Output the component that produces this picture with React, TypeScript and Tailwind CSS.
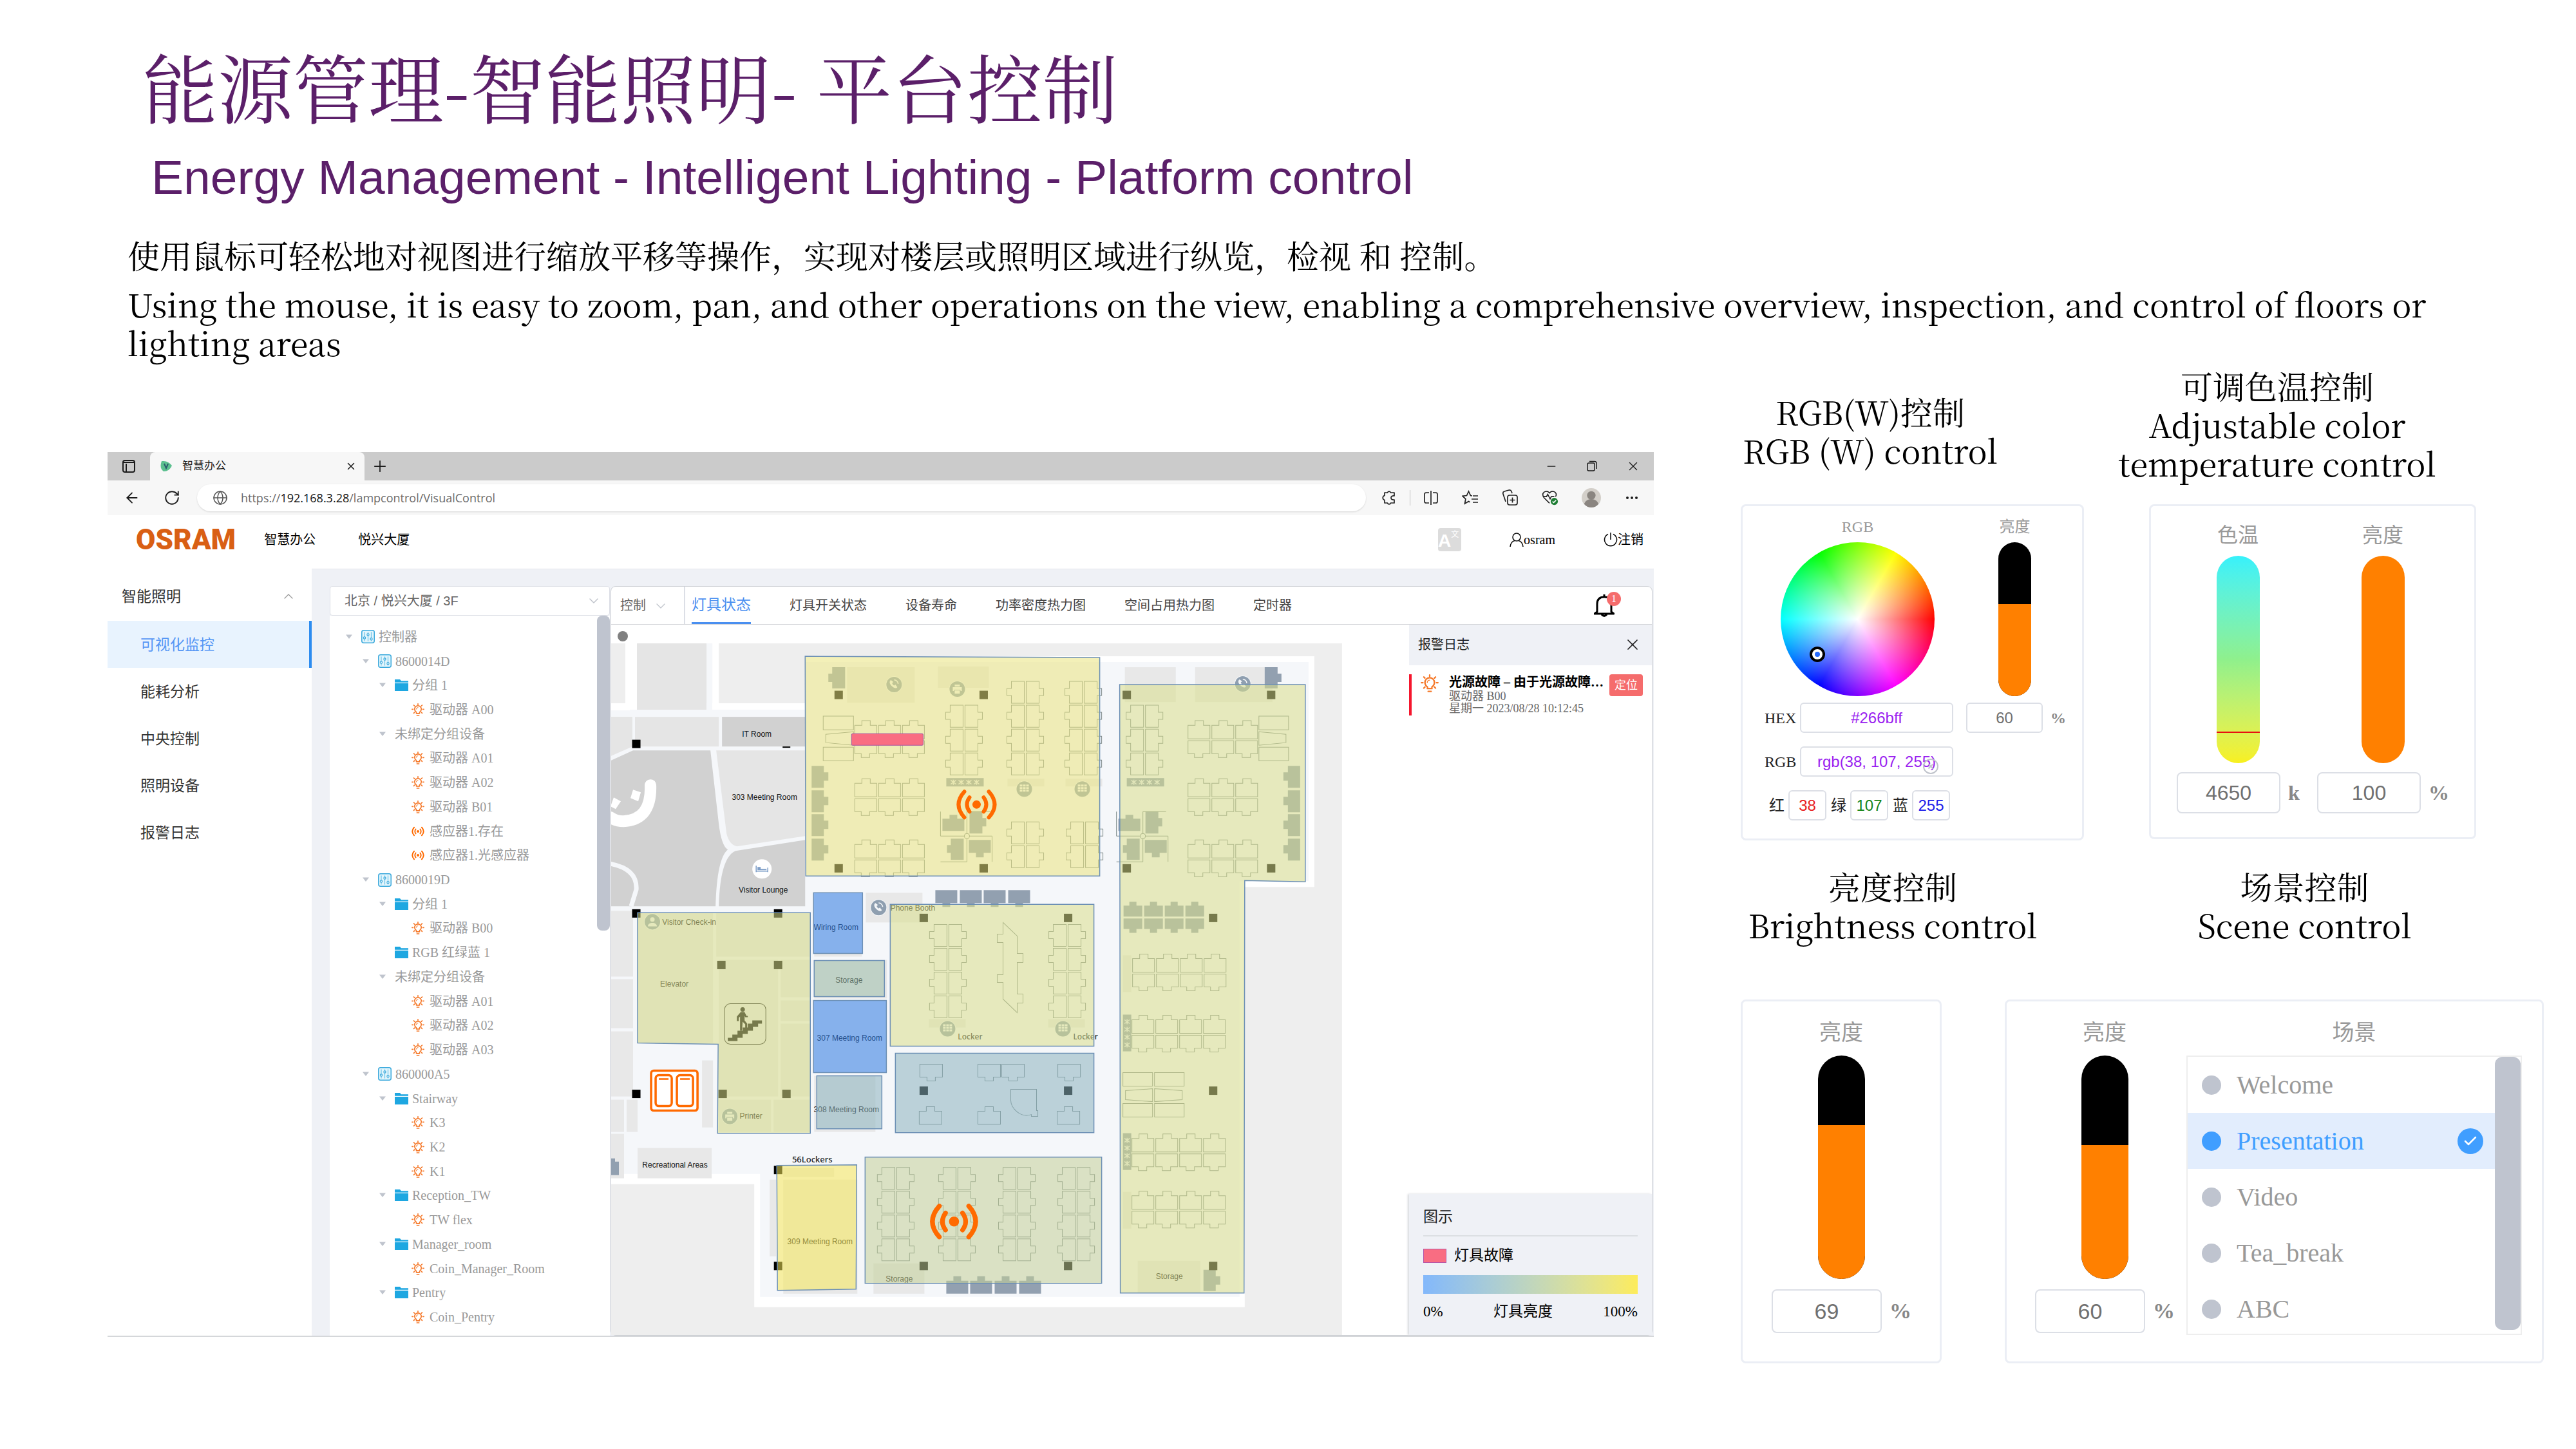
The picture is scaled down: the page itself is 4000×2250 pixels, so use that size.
import React from "react";
import {
  ArrowLeft,
  Check,
  ChevronDown,
  ChevronUp,
  Ellipsis,
  Globe,
  Minus,
  Plus,
  RotateCw,
  X,
} from "lucide-react";

const noop = () => {};

/* ---------- small icons ---------- */

function BulbIcon({ className }: { className: string }) {
  return (
    <svg viewBox="0 0 24 24" className={className} fill="none" stroke="#f5792a" strokeWidth="2" strokeLinecap="round">
      <path d="M9 19v-2.200C7 15.400 5.700 13.300 5.700 10.900a6.300 6.300 0 0 1 12.600 0c0 2.400-1.300 4.500-3.300 5.900V19z" strokeLinejoin="round" />
      <path d="M10 22.800h4M12 1v2M4.200 3.600l1.400 1.400M19.800 3.600l-1.400 1.400M1 11.200h2M21 11.200h2M4.200 18.400l1.400-1.400M19.800 18.400l-1.400-1.400" />
      <path d="M12 7.800a3.200 3.200 0 0 0-3.200 3.200" strokeWidth="1.200" />
    </svg>
  );
}

function SensorIcon({ className }: { className: string }) {
  return (
    <svg viewBox="-32 -24 64 48" className={className}>
      <SensorShape />
    </svg>
  );
}

function SensorShape() {
  return (
    <g fill="none" stroke="#ff6a00" strokeWidth="6" strokeLinecap="round">
      <circle r="6.5" fill="#ff6a00" stroke="none" />
      <path d="M-11 -11q-8 11 0 22M11 -11q8 11 0 22M-19 -20q-18 20 0 40M19 -20q18 20 0 40" />
    </g>
  );
}

function ControllerIcon() {
  return (
    <svg viewBox="0 0 21 21" className="size-[21px]" fill="none" stroke="#3aa9dc" strokeWidth="1.200">
      <rect x="0.800" y="0.800" width="19.400" height="19.400" rx="3" fill="#e3f5fc" strokeWidth="1.500" />
      <path d="M5 3.500v7.500M5 14v3.500M10.500 3.500v2.500M10.500 9v8.500M15.500 3.500v9M15.500 15.500v2" stroke="#6cc3e8" />
      <circle cx="5" cy="12.500" r="1.600" fill="#fff" />
      <circle cx="10.500" cy="7.500" r="1.600" fill="#fff" />
      <circle cx="15.500" cy="14.200" r="1.600" fill="#fff" />
    </svg>
  );
}

function FolderIcon() {
  return (
    <svg viewBox="0 0 21 18" className="h-[18px] w-[21px]">
      <path d="M0 0h8l2 2.200h11v2.600H0z" fill="#1ea7e1" />
      <path d="M0 6h21v12H0z" fill="#1ea7e1" />
    </svg>
  );
}

/* ---------- device tree ---------- */

type NodeKind = "controller" | "folder" | "group" | "lamp" | "sensor";
type TreeNode = { depth: 0 | 1 | 2 | 3; kind: NodeKind; label: string; leaf?: boolean };

const tree: TreeNode[] = [
  { depth: 0, kind: "controller", label: "控制器" },
  { depth: 1, kind: "controller", label: "8600014D" },
  { depth: 2, kind: "folder", label: "分组 1" },
  { depth: 3, kind: "lamp", label: "驱动器 A00" },
  { depth: 2, kind: "group", label: "未绑定分组设备" },
  { depth: 3, kind: "lamp", label: "驱动器 A01" },
  { depth: 3, kind: "lamp", label: "驱动器 A02" },
  { depth: 3, kind: "lamp", label: "驱动器 B01" },
  { depth: 3, kind: "sensor", label: "感应器1.存在" },
  { depth: 3, kind: "sensor", label: "感应器1.光感应器" },
  { depth: 1, kind: "controller", label: "8600019D" },
  { depth: 2, kind: "folder", label: "分组 1" },
  { depth: 3, kind: "lamp", label: "驱动器 B00" },
  { depth: 2, kind: "folder", label: "RGB 红绿蓝 1", leaf: true },
  { depth: 2, kind: "group", label: "未绑定分组设备" },
  { depth: 3, kind: "lamp", label: "驱动器 A01" },
  { depth: 3, kind: "lamp", label: "驱动器 A02" },
  { depth: 3, kind: "lamp", label: "驱动器 A03" },
  { depth: 1, kind: "controller", label: "860000A5" },
  { depth: 2, kind: "folder", label: "Stairway" },
  { depth: 3, kind: "lamp", label: "K3" },
  { depth: 3, kind: "lamp", label: "K2" },
  { depth: 3, kind: "lamp", label: "K1" },
  { depth: 2, kind: "folder", label: "Reception_TW" },
  { depth: 3, kind: "lamp", label: "TW flex" },
  { depth: 2, kind: "folder", label: "Manager_room" },
  { depth: 3, kind: "lamp", label: "Coin_Manager_Room" },
  { depth: 2, kind: "folder", label: "Pentry" },
  { depth: 3, kind: "lamp", label: "Coin_Pentry" },
];

const indent = { 0: "pl-6", 1: "pl-[50px]", 2: "pl-[76px]", 3: "pl-[102px]" };

function TreeRow({ node }: { node: TreeNode }) {
  const hasArrow = !node.leaf && node.depth < 3;
  return (
    <li className={`flex flex-1 items-center ${indent[node.depth]}`}>
      <button type="button" className="flex items-center gap-[13px] leading-6 whitespace-nowrap">
        <svg viewBox="0 0 12 8" className="h-2 w-3">
          {hasArrow && <path d="M1 0.500h10L6 7z" fill="#bfc4cd" />}
        </svg>
        <span className="flex items-center gap-1.5">
          {node.kind === "controller" && <ControllerIcon />}
          {node.kind === "folder" && <FolderIcon />}
          {node.kind === "lamp" && <BulbIcon className="mr-0.5 size-5" />}
          {node.kind === "sensor" && <SensorIcon className="mr-0.5 h-4 w-5" />}
          {node.label}
        </span>
      </button>
    </li>
  );
}

/* ---------- floor plan ---------- */

type Pt = [number, number];

const deskColumns: { x: number; y: number; n: number }[] = [
  { x: 1468, y: 1095, n: 3 },
  { x: 1563, y: 1058, n: 4 },
  { x: 1653, y: 1058, n: 4 },
  { x: 1563, y: 1276, n: 2 },
  { x: 1655, y: 1276, n: 2 },
  { x: 1748, y: 1095, n: 3 },
  { x: 1443, y: 1435, n: 4 },
  { x: 1628, y: 1435, n: 4 },
  { x: 1362, y: 1812, n: 4 },
  { x: 1457, y: 1812, n: 4 },
  { x: 1550, y: 1812, n: 4 },
  { x: 1642, y: 1812, n: 4 },
];

const deskRows: { x: number; y: number; n: number }[] = [
  { x: 1327, y: 1119, n: 3 },
  { x: 1327, y: 1209, n: 3 },
  { x: 1327, y: 1304, n: 3 },
  { x: 1844, y: 1119, n: 3 },
  { x: 1844, y: 1209, n: 3 },
  { x: 1844, y: 1304, n: 3 },
  { x: 1758, y: 1481, n: 4 },
  { x: 1757, y: 1576, n: 4 },
  { x: 1757, y: 1760, n: 4 },
  { x: 1757, y: 1849, n: 4 },
];

const pillars: Pt[] = [
  [988, 1155], [1302, 1079], [1527, 1079], [1302, 1348], [1527, 1348],
  [1749, 1079], [1973, 1079], [1749, 1348], [1973, 1348],
  [988, 1418], [1208, 1418], [1120, 1498], [1208, 1498], [988, 1698], [1122, 1698], [1221, 1698],
  [1434, 1425], [1658, 1425], [1434, 1693], [1658, 1693],
  [1208, 1816], [1208, 1965], [1434, 1965], [1658, 1965],
  [1883, 1425], [1883, 1693], [1883, 1965],
];

const greyBlocks: [number, number, number, number][] = [
  [948, 1414, 35, 102], [948, 1520, 35, 76], [948, 1601, 35, 101], [948, 1707, 21, 50],
  [973, 1707, 17, 50], [948, 1760, 21, 69], [1090, 1646, 17, 104], [990, 1782, 115, 47],
  [990, 1417, 117, 202], [1112, 1417, 146, 68], [1116, 1490, 92, 212], [1212, 1490, 46, 58],
  [1212, 1553, 46, 32], [1212, 1589, 46, 113], [1116, 1707, 81, 50], [1201, 1707, 57, 50],
  [1344, 1386, 88, 46], [1264, 1386, 74, 99], [1264, 1490, 113, 60], [1264, 1553, 113, 112],
  [1264, 1670, 95, 87], [1195, 1831, 10, 119], [1216, 1831, 115, 177], [1216, 1813, 79, 14],
  [1356, 1961, 79, 47], [1442, 1582, 57, 13], [1627, 1582, 57, 13],
  [1315, 1036, 105, 55], [1456, 1035, 79, 33], [1564, 1209, 57, 12], [1654, 1209, 57, 12],
  [1746, 1036, 79, 54], [1855, 1036, 120, 54], [1743, 1483, 13, 57], [1743, 1850, 13, 57],
  [1766, 1957, 97, 50],
];

const filledDesks: string[] = [
  "M1292 1036h20v33h-20v-10h-6v-13h6z",
  "M1963 1036h20v10h6v13h-6v10h-20z",
  "M1868 1971h19v10h7v13h-7v10h-19z",
  "M948 1798h7v5h6v21h-13z",
  ...[1189, 1227, 1264, 1302].map((y) => `M1260 ${y}h19v10h7v13h-7v11h-19z`),
  ...[1189, 1227, 1264, 1302].map((y) => `M1999 ${y}h19v34h-19v-11h-7v-13h7z`),
  ...[1452, 1490, 1527, 1565].map((x) => `M${x} 1382h34v20h-11v6h-12v-6h-11z`),
  ...[1469, 1506, 1544, 1582].map((x) => `M${x} 1988h11v-7h12v7h11v20h-34z`),
  ...[1744, 1776, 1808, 1840].map((x) => `M${x} 1406h9v-6h11v6h9v17h-29zM${x} 1426h29v16h-9v6h-11v-6h-9z`),
];

const labels: [number, number, string][] = [
  [1175, 1144, "IT Room"],
  [1187, 1242, "303 Meeting Room"],
  [1185, 1386, "Visitor Lounge"],
  [1070, 1436, "Visitor Check-in"],
  [1047, 1532, "Elevator"],
  [1298, 1444, "Wiring Room"],
  [1318, 1526, "Storage"],
  [1319, 1615, "307 Meeting Room"],
  [1314, 1726, "308 Meeting Room"],
  [1417, 1414, "Phone Booth"],
  [1166, 1736, "Printer"],
  [1048, 1812, "Recreational Areas"],
  [1273, 1931, "309 Meeting Room"],
  [1396, 1989, "Storage"],
  [1815, 1985, "Storage"],
];

const zones: { points: string; fill: string }[] = [
  { points: "1250,1019 1707,1021 1707,1360 1251,1360", fill: "#eae37e" },
  { points: "1738,1063 2026,1063 2026,1369 1932,1367 1931,2007 1739,2007", fill: "#d8de8a" },
  { points: "990,1417 1258,1417 1258,1759 1114,1759 1115,1621 990,1619", fill: "#d8de8a" },
  { points: "1263,1386 1339,1386 1339,1480 1263,1480", fill: "#3583ee" },
  { points: "1264,1491 1373,1491 1373,1547 1264,1547", fill: "#9dbeaa" },
  { points: "1263,1553 1376,1553 1376,1665 1263,1665", fill: "#3583ee" },
  { points: "1268,1670 1369,1670 1369,1752 1268,1752", fill: "#8ab2bd" },
  { points: "1382,1404 1698,1404 1698,1624 1382,1624", fill: "#d8de8a" },
  { points: "1390,1635 1698,1635 1698,1758 1390,1758", fill: "#8ab2bd" },
  { points: "1206,1809 1330,1808 1329,2001 1207,2003", fill: "#f5e758" },
  { points: "1343,1796 1710,1796 1710,1992 1343,1992", fill: "#c3cf97" },
];

function Meeting({ x, flip }: { x: number; flip?: boolean }) {
  return (
    <path
      d={
        flip
          ? `M${x} 1112h46v21h-46zM${x} 1160h46v21h-46zM${x} 1136l42 4v13l-42 4z`
          : `M${x} 1112h47v21h-47zM${x} 1160h47v21h-47zM${x + 47} 1136l-43 4v13l43 4z`
      }
    />
  );
}

function Pod({ x }: { x: number }) {
  return (
    <g transform={`translate(${x} 0)`}>
      <path
        fill="#92a0b0"
        d="M-38 1271h11v-6h12v6h11v19h-34zM4 1260h20v10h6v13h-6v11h-20zM-25 1302h20v33h-20v-11h-6v-12h6zM3 1304h34v20h-11v7h-12v-7h-11z"
      />
      <path d="M0 1260v78M-41 1298h80M-41 1260v38M39 1298v40M-41 1338h41M0 1260h36" fill="none" stroke="#7d8a8a" />
      <circle cx="0" cy="1298" r="4" fill="#f4f6f8" stroke="#7d8a8a" />
    </g>
  );
}

function Planter({ x, y, vertical }: { x: number; y: number; vertical?: boolean }) {
  return (
    <g transform={`translate(${x} ${y})`}>
      <rect width={vertical ? 13 : 58} height={vertical ? 57 : 13} fill="#92a0b0" />
      {[11, 23, 35, 47].map((p) => {
        const cx = vertical ? 6.5 : p;
        const cy = vertical ? p : 6.5;
        return (
          <path
            key={p}
            d={`M${cx - 4} ${cy - 3}l8 6M${cx + 4} ${cy - 3}l-8 6M${cx} ${cy - 4}v8`}
            stroke="#e8ecf0"
            strokeWidth="1.5"
          />
        );
      })}
    </g>
  );
}

function Marker({ x, y, kind }: { x: number; y: number; kind: "phone" | "printer" | "locker" | "person" }) {
  return (
    <g transform={`translate(${x} ${y})`}>
      <circle r="13" fill="#f4f6f8" />
      <circle r="12" fill="#8f9fb0" />
      <g fill="#f4f6f8">
        {kind === "phone" && (
          <path d="M-5 -7c-3 2-2 6 1 9s7 5 9 2l-3-4-2 1.500c-2-1-3-3-3-4l2-1.500zM0 -8a7 7 0 0 1 7 7h-1.500A5.500 5.500 0 0 0 0 -6.500z" />
        )}
        {kind === "printer" && <path d="M-4 -7h8v3h-8zM-7 -3H7v6H5v-2H-5v2h-2zM-4 2h8v5h-8z" />}
        {kind === "locker" && (
          <path d="M-7 -7h4v3h-4zM-2 -7h4v3h-4zM3 -7h4v3h-4zM-7 -3h4v3h-4zM-2 -3h4v3h-4zM3 -3h4v3h-4zM-7 1h4v3h-4zM-2 1h4v3h-4zM3 1h4v3h-4z" />
        )}
        {kind === "person" && <path d="M0 -7a3.500 3.500 0 1 1 0 7a3.500 3.500 0 0 1 0-7zM-7 7c0-7 14-7 14 0z" />}
      </g>
    </g>
  );
}

function FloorPlan() {
  return (
    <svg viewBox="949 970 1238 1103" preserveAspectRatio="xMinYMin slice" className="h-[1103px] w-full" role="img" aria-label="3F 平面图">
      <rect x="948" y="999" width="1135" height="1074" fill="#eeeeee" />
      <path d="M948 1092h302v-73h790v358h-108v652H1171v-191H948z" fill="#ffffff" />
      <path d="M948 1102h302v-74h781v340h-107v645H1180v-191H948z" fill="#f5f7fa" />

      {/* outdoor paths */}
      <rect x="971" y="999" width="18" height="100" fill="#fff" />
      <rect x="948" y="1092" width="30" height="11" fill="#fff" />
      <rect x="989" y="999" width="108" height="103" fill="#e5e5e5" />
      <rect x="1097" y="999" width="9" height="103" fill="#f5f7fa" />
      <path d="M1106 999h10v95h134v8h-144z" fill="#fff" />

      {/* lobby */}
      <path d="M948 1113h34v46l-34 15z" fill="#e5e5e5" />
      <rect x="986" y="1113" width="130" height="46" fill="#e5e5e5" />
      <rect x="1121" y="1113" width="129" height="46" fill="#d1d1d1" />
      <path d="M948 1181l35-16h120l13 114q4 34 14 40q-17 14-19 88H948z" fill="#d1d1d1" />
      <path d="M1112 1165h138v133l-106 16q-12-3-16-20z" fill="#e5e5e5" />
      <path d="M1250 1304l-108 17q-24 10-26 86h134z" fill="#d1d1d1" />
      <path d="M948 1341q42 8 40 40l-8 26" fill="none" stroke="#f5f7fa" strokeWidth="7" />
      <path d="M1010 1219q2 54-42 56q-12 0-20-6" fill="none" stroke="#fff" strokeWidth="18" strokeLinecap="round" />
      <path d="M983 1226l12 4-4 14-12-5zM948 1252l5-14 11 6-8 12z" fill="#fff" />

      {greyBlocks.map(([x, y, w, h]) => (
        <rect key={`${x}-${y}`} x={x} y={y} width={w} height={h} fill="#e8e8e8" />
      ))}

      {/* furniture */}
      <g fill="none" stroke="#7f8b8b">
        {deskColumns.map(({ x, y, n }) =>
          Array.from({ length: n }, (_, i) => (
            <path
              key={`${x}-${y}-${i}`}
              d={`M${x + 7} ${y + i * 37}h20v34h-20v-12h-7v-11h7zM${x + 30} ${y + i * 37}h20v11h7v11h-7v12h-20z`}
            />
          )),
        )}
        {deskRows.map(({ x, y, n }) =>
          Array.from({ length: n }, (_, i) => (
            <path
              key={`${x}-${y}-${i}`}
              d={`M${x + i * 37} ${y + 7}h11v-7h13v7h10v21h-34zM${x + i * 37} ${y + 31}h34v20h-11v6h-13v-6h-10z`}
            />
          )),
        )}
        {[1428, 1518, 1555, 1642].map((x) => (
          <path key={x} d={`M${x} 1652h35v20h-11v6h-13v-6h-11z`} />
        ))}
        {[1427, 1518, 1641].map((x) => (
          <path key={x} d={`M${x} 1725h11v-7h13v7h11v20h-35z`} />
        ))}
        <Meeting x={1278} />
        <Meeting x={1954} flip />
        <path d="M1743 1665h46v21h-46zM1792 1665h46v21h-46zM1743 1713h46v21h-46zM1792 1713h46v21h-46zM1789 1690l-42 3v14l42 3zM1792 1690l43 3v14l-43 3z" />
        <path d="M1557 1432l22 21v27h9v14h-9v49h9v14h-9v15l-22-21v-26h-9v-12h9v-50h-9v-13h9z" />
        <path d="M1569 1691h40v33h2v9h-10v-3q-12 4-22-4t-10-18z" />
      </g>
      <g fill="#92a0b0">
        {filledDesks.map((d) => (
          <path key={d} d={d} />
        ))}
      </g>
      <Pod x={1501} />
      <Pod x={1774} />
      <Planter x={1469} y={1208} />
      <Planter x={1749} y={1208} />
      <Planter x={1743} y={1575} vertical />
      <Planter x={1743} y={1759} vertical />

      {pillars.map(([x, y]) => (
        <rect key={`${x}-${y}`} x={x - 6.5} y={y - 6.5} width="13" height="13" fill="#000" />
      ))}
      <rect x="1215" y="1159" width="12" height="2" fill="#000" />

      <Marker x={1388} y={1063} kind="phone" />
      <Marker x={1486} y={1070} kind="printer" />
      <Marker x={1590} y={1225} kind="locker" />
      <Marker x={1680} y={1225} kind="locker" />
      <Marker x={1929} y={1062} kind="phone" />
      <Marker x={1013} y={1431} kind="person" />
      <Marker x={1364} y={1409} kind="phone" />
      <Marker x={1471} y={1597} kind="locker" />
      <Marker x={1650} y={1597} kind="locker" />
      <Marker x={1133} y={1733} kind="printer" />
      <circle cx="1183" cy="1349" r="15" fill="#fff" />
      <path d="M1174 1344v10M1174 1352.500h18M1192 1347v7" stroke="#7f9fc8" strokeWidth="1.500" />
      <path d="M1176 1346h5v3h9v2h-14z" fill="#7f9fc8" />

      <g fontFamily="Liberation Sans, Arial, sans-serif" fontSize="12" textAnchor="middle" fill="#111">
        {labels.map(([x, y, t]) => (
          <text key={`${x}-${y}`} x={x} y={y}>
            {t}
          </text>
        ))}
      </g>
      <g fontFamily="Noto Sans, sans-serif" fontSize="13" fontWeight="500" textAnchor="middle" fill="#222">
        <text x="1506" y="1613" fontSize="12">Locker</text>
        <text x="1685" y="1613" fontSize="12">Locker</text>
        <text x="1261" y="1804">56Lockers</text>
      </g>

      {/* stairs sign */}
      <g>
        <rect x="1125" y="1558" width="64" height="63" rx="9" fill="none" stroke="#111" />
        <path
          d="M1130 1616v-5h7v-5h8v-6h8v-5h8v-6h7v-5h15v5h-6v5h-8v6h-8v5h-8v6h-8v5z"
          fill="#000"
        />
        <circle cx="1153" cy="1567" r="3.500" />
        <path d="M1150 1571h6l3 6h2v2h-4l-1-2v7l4 5v7h-3v-6l-4-4-1 14h-3v-22l-2 2v5h-3v-7z" />
      </g>

      {zones.map((z) => (
        <polygon key={z.points} points={z.points} fill={z.fill} fillOpacity="0.55" stroke="#6d90b5" strokeWidth="1.500" />
      ))}

      {/* devices */}
      <rect x="1322" y="1139" width="111" height="18" rx="2" fill="#f96d82" stroke="#a8559f" />
      <g transform="translate(1516 1249)">
        <SensorShape />
      </g>
      <g transform="translate(1481 1896) scale(1.200)">
        <SensorShape />
      </g>
      <g fill="none" stroke="#ff6a00" strokeWidth="3.500">
        <rect x="1011" y="1662" width="72" height="62" rx="4" fill="#fff" />
        <rect x="1018" y="1669" width="25" height="48" rx="5" />
        <rect x="1051" y="1669" width="25" height="48" rx="5" />
        <path d="M1023 1675h15M1056 1675h15" strokeWidth="2.500" />
      </g>
      <circle cx="967" cy="988" r="8" fill="#808080" />
    </svg>
  );
}

/* ---------- browser window ---------- */

const sideItems = ["可视化监控", "能耗分析", "中央控制", "照明设备", "报警日志"];
const tabs = ["灯具开关状态", "设备寿命", "功率密度热力图", "空间占用热力图", "定时器"];

function BrowserChrome() {
  return (
    <div className="bg-[#f7f7f7] text-[#1b1b1b]">
      <div className="flex h-11 bg-[#cbcbcb]">
        <button type="button" aria-label="标签操作" className="grid w-[66px] place-items-center">
          <svg viewBox="0 0 22 22" className="size-[22px]" fill="none" stroke="#1b1b1b" strokeWidth="2">
            <rect x="2" y="2" width="18" height="18" rx="3" />
            <path d="M2 5h18M7 7v13" strokeWidth="2" />
          </svg>
        </button>
        <div className="flex w-[333px] items-center rounded-t-lg bg-[#f7f7f7] pr-3 pl-4">
          <svg viewBox="0 0 18 18" className="size-[18px]">
            <path d="M2 1q10-1 16 7-4 9-13 9Q-2 12 2 1z" fill="#5cc08f" />
            <path d="M6 5l3 7 3-7" fill="none" stroke="#2c5a6e" strokeWidth="2" />
          </svg>
          <span className="ml-4 flex-1 text-[17px] leading-6">智慧办公</span>
          <button type="button" aria-label="关闭标签">
            <X className="size-[18px]" strokeWidth={2} />
          </button>
        </div>
        <button type="button" aria-label="新建标签" className="ml-2.5">
          <Plus className="size-7" strokeWidth={1.5} />
        </button>
        <div className="ml-auto flex items-center gap-11 pr-[21px]">
          <button type="button" aria-label="最小化"><Minus className="size-5" strokeWidth={1.5} /></button>
          <button type="button" aria-label="还原">
            <svg viewBox="0 0 18 18" className="size-[18px]" fill="none" stroke="#1b1b1b" strokeWidth="1.500">
              <rect x="2" y="4" width="11" height="12" rx="2" />
              <path d="M5 1.500h8q3 0 3 3V13" />
            </svg>
          </button>
          <button type="button" aria-label="关闭"><X className="size-[22px]" strokeWidth={1.5} /></button>
        </div>
      </div>
      <div className="flex h-[54px] items-center pr-[22px]">
        <button type="button" aria-label="后退" className="ml-[25px]"><ArrowLeft className="size-[26px]" strokeWidth={1.7} /></button>
        <button type="button" aria-label="刷新" className="ml-9"><RotateCw className="size-[26px]" strokeWidth={1.7} /></button>
        <div className="ml-[26px] flex h-[42px] flex-1 items-center rounded-full bg-white pl-6 shadow-sm">
          <Globe className="size-6 text-[#555]" strokeWidth={1.5} />
          <div
            role="textbox"
            aria-label="地址"
            contentEditable
            suppressContentEditableWarning
            className="ml-5 font-[family-name:'Open_Sans',sans-serif] text-lg leading-6 text-[#6b6b6b]"
          >
            https://<span className="text-[#111]">192.168.3.28</span>/lampcontrol/VisualControl
          </div>
        </div>
        <div className="ml-6 flex items-center gap-9">
          <div className="flex items-center gap-5">
            <svg viewBox="0 0 24 24" className="size-6" fill="none" stroke="#222" strokeWidth="1.700" strokeLinejoin="round">
              <path d="M5 4h4.500a2.600 2.600 0 0 1 5 0H20v5q-5-.500-5 3t5 3v5h-5.500a2.600 2.600 0 0 1-5 0H5v-4.500a3.600 3.600 0 0 1 0-7z" />
            </svg>
            <div className="h-6 w-px bg-[#c0c0c0]" />
            <svg viewBox="0 0 24 24" className="size-6" fill="none" stroke="#222" strokeWidth="1.700">
              <path d="M12 1v22M9 4H4.500Q2 4 2 6.500v11Q2 20 4.500 20H9M15 4h4.500Q22 4 22 6.500v11q0 2.500-2.500 2.500H15" />
            </svg>
          </div>
          <svg viewBox="0 0 26 24" className="h-6 w-[26px]" fill="none" stroke="#222" strokeWidth="1.700">
            <path d="M16 9l-2.500-.500L10.500 2 7.500 8.500 1 9.200l4.800 4.600L4.500 21l6-3.500 2 1.200M17 9h8M15 14h10M17 19h8" />
          </svg>
          <svg viewBox="0 0 26 26" className="size-[26px]" fill="none" stroke="#222" strokeWidth="1.700">
            <rect x="9" y="9" width="15" height="15" rx="3" />
            <path d="M16.500 12.500v8M12.500 16.500h8M6 19l-4-12q-1-3 2-4l7-2q3-.500 4 2l1 3" />
          </svg>
          <svg viewBox="0 0 28 26" className="h-[26px] w-[26px]" fill="none" stroke="#222" strokeWidth="1.700">
            <path d="M13 22L4 13Q-.500 7 4 3.500 9 0 13 5q4-5 9-1.500Q26 7 23 11M2 11h6l2-4 4 8 2-4h5" />
            <circle cx="21" cy="19" r="6" fill="#1e7e34" stroke="none" />
            <path d="M18 19l2 2 4-4" stroke="#fff" />
          </svg>
          <svg viewBox="0 0 32 32" className="size-[30px]">
            <circle cx="16" cy="16" r="16" fill="#d3cfc9" />
            <circle cx="16" cy="12" r="7" fill="#8a8580" />
            <path d="M4 26q3-8 12-8t12 8q-5 6-12 6T4 26z" fill="#8a8580" />
          </svg>
          <Ellipsis className="size-6" />
        </div>
      </div>
    </div>
  );
}

function AlarmPanel() {
  return (
    <aside className="flex flex-col text-[#222]">
      <div className="flex h-[63px] items-center justify-between bg-[#eff1f6] pr-4 pb-0.5 pl-3.5 text-xl leading-6">
        报警日志
        <button type="button" aria-label="关闭报警日志"><X className="size-7" strokeWidth={1.5} /></button>
      </div>
      <div className="mt-3.5 flex h-16 border-l-4 border-[#f5162d] pr-3.5">
        <BulbIcon className="ml-3.5 size-7" />
        <div className="ml-4 flex-1 text-lg leading-[19px] text-[#666]">
          <div className="text-xl leading-[25px] font-bold whitespace-nowrap text-black">光源故障 – 由于光源故障…</div>
          <div>驱动器 B00</div>
          <div>星期一 2023/08/28 10:12:45</div>
        </div>
        <button type="button" className="h-[34px] w-[52px] rounded bg-[#f56c6c] text-lg leading-6 text-white">定位</button>
      </div>
      <div className="mt-auto bg-[#eff1f6] px-[22px] pt-5 pb-5 text-[23px] leading-8 shadow-[-2px_0_3px_#d8dade]">
        <div className="border-b-2 border-[#dcdfe3] pb-3">图示</div>
        <div className="mt-3.5 flex items-center gap-3 text-black">
          <span className="h-[22px] w-9 border border-[#b455a8] bg-[#f96d82]" />
          灯具故障
        </div>
        <div className="mt-3.5 h-[29px] bg-linear-to-r from-[#83b8fb] to-[#fdec5a]" />
        <div className="mt-3 flex justify-between text-black">
          <span>0%</span>
          <span>灯具亮度</span>
          <span>100%</span>
        </div>
      </div>
    </aside>
  );
}

function BrowserWindow() {
  return (
    <section className="border-b-2 border-[#d5d7da] font-[family-name:'Liberation_Sans','Noto_Sans_CJK_SC',sans-serif]">
      <BrowserChrome />
      <header className="flex h-[83px] items-center bg-white pb-2 pl-11 text-xl leading-6">
        <a href="#home" className="font-[family-name:Roboto,sans-serif] text-[44px] leading-[48px] font-black text-[#d95f14]">OSRAM</a>
        <a href="#office" className="ml-11">智慧办公</a>
        <a href="#building" className="ml-[66px]">悦兴大厦</a>
        <div className="ml-auto flex items-center gap-[75px] pr-4 font-[family-name:'Liberation_Serif','Noto_Sans_CJK_SC',serif]">
          <button type="button" className="flex size-9 items-start rounded-sm bg-[#dcdcdc] text-white">
            <span className="self-end font-[family-name:'Liberation_Sans',sans-serif] text-[28px] leading-8 font-bold">A</span>
            <span className="text-xs leading-5">文</span>
          </button>
          <button type="button" className="flex items-center">
            <svg viewBox="0 0 22 22" className="size-[22px]" fill="none" stroke="#111" strokeWidth="1.600">
              <circle cx="11" cy="7" r="6" />
              <path d="M1 22q1-8 7-9.500M21 22q-1-8-7-9.500" />
            </svg>
            osram
          </button>
          <button type="button" className="flex items-center">
            <svg viewBox="0 0 22 22" className="size-[22px]" fill="none" stroke="#111" strokeWidth="1.600">
              <path d="M7 2.500a9.500 9.500 0 1 0 8 0M11 0v11" />
            </svg>
            注销
          </button>
        </div>
      </header>
      <div className="flex bg-[#eff1f6]">
        <nav className="w-[317px] bg-white pt-2 text-[23px] leading-8 text-[#333]">
          <button type="button" className="flex h-[73px] w-full items-center justify-between pr-6 pb-1 pl-[22px]">
            智能照明
            <ChevronUp className="size-6 text-[#999]" strokeWidth={1.2} />
          </button>
          {sideItems.map((item, i) => (
            <a
              key={item}
              href={`#${item}`}
              className={
                i === 0
                  ? "flex h-[73px] items-center border-r-4 border-[#2d8cf0] bg-[#e8f3fe] pl-[51px] text-[#5596f5]"
                  : "flex h-[73px] items-center pl-[51px]"
              }
            >
              {item}
            </a>
          ))}
        </nav>
        <div className="flex flex-1 gap-px border-t border-[#e4e6eb] pt-[26px] pr-0.5 pl-7 text-xl">
          <div className="flex w-[435px] flex-col">
            <div className="relative h-[46px] rounded border border-[#dcdfe6] bg-white text-[#666]">
              <select aria-label="楼层" className="h-full w-full appearance-none pl-[22px]">
                <option>北京 / 悦兴大厦 / 3F</option>
              </select>
              <ChevronDown className="absolute top-2.5 right-3 size-6 text-[#c0c4cc]" strokeWidth={1.5} />
            </div>
            <div className="flex flex-1 bg-white">
              <ul className="mt-3.5 flex h-[1094px] flex-1 flex-col font-[family-name:'Liberation_Serif','Noto_Sans_CJK_SC',serif] text-[#999]">
                {tree.map((node, i) => (
                  <TreeRow key={i} node={node} />
                ))}
              </ul>
              <div className="h-[489px] w-5 rounded-lg bg-[#bfc4cf]" />
            </div>
          </div>
          <div className="flex-1 rounded-lg border border-[#cdd0d5] bg-white">
            <div className="flex h-[59px] border-b border-[#d3d5d8] text-[#444]">
              <div className="relative w-[115px] border-r-2 border-[#dcdfe6] text-[#666]">
                <select aria-label="控制" className="h-full w-full appearance-none pl-3.5">
                  <option>控制</option>
                </select>
                <ChevronDown className="absolute top-[18px] right-6 size-6 text-[#c0c4cc]" strokeWidth={1.3} />
              </div>
              <div role="tablist" className="flex gap-[60px] pl-2.5 leading-8">
                <button type="button" role="tab" aria-selected="true" className="border-b-[3px] border-[#4a8ff0] text-[23px] text-[#4a8ff0]">
                  灯具状态
                </button>
                {tabs.map((t) => (
                  <button key={t} type="button" role="tab" aria-selected="false">
                    {t}
                  </button>
                ))}
              </div>
              <button type="button" aria-label="报警" className="relative mr-[58px] ml-auto">
                <svg viewBox="0 0 32 38" className="h-[38px] w-8" fill="none" stroke="#000" strokeWidth="3">
                  <path d="M5 29V17Q5 6 16 6t11 11v12l4 3H1zM16 6V2M12 33q4 5 8 0" strokeLinejoin="round" />
                </svg>
                <span className="absolute top-2 left-5 grid size-[22px] place-items-center rounded-full bg-[#f56c6c] font-[family-name:'Liberation_Serif',serif] text-base leading-none text-white">
                  1
                </span>
              </button>
            </div>
            <div className="flex font-[family-name:'Liberation_Serif','Noto_Sans_CJK_SC',serif]">
              <div className="flex-1">
                <FloorPlan />
              </div>
              <div className="flex w-[377px] flex-col *:flex-1">
                <AlarmPanel />
              </div>
            </div>
          </div>
        </div>
      </div>
    </section>
  );
}

/* ---------- control cards ---------- */

function Heading({ children, className }: { children: React.ReactNode; className: string }) {
  return <h2 className={`text-center text-[50px] leading-[60px] ${className}`}>{children}</h2>;
}

function LevelBar({ label, value, className }: { label: string; value: number; className: string }) {
  return (
    <div className={`relative flex flex-col justify-end overflow-hidden rounded-full bg-black ${className}`}>
      <div className="bg-[#ff8000]" style={{ height: `${value}%` }} />
      <input type="range" aria-label={label} value={value} onChange={noop} className="absolute inset-0 opacity-0" />
    </div>
  );
}

function NumberBox({ label, value, unit, className }: { label: string; value: string; unit: string; className: string }) {
  return (
    <label className="flex items-center gap-3 font-bold text-[#888]">
      <input
        aria-label={label}
        value={value}
        onChange={noop}
        className={`border-2 border-[#dcdfe6] text-center font-[family-name:'Liberation_Sans',sans-serif] font-normal text-[#707070] ${className}`}
      />
      {unit}
    </label>
  );
}

const card = "border-[3px] border-[#ebeef5] rounded-lg bg-white font-[family-name:'Liberation_Serif','Noto_Sans_CJK_SC',serif]";

function RgbCard() {
  const channels = [
    { name: "红", value: "38", color: "text-[#e8201e]" },
    { name: "绿", value: "107", color: "text-[#158515]" },
    { name: "蓝", value: "255", color: "text-[#2020ea]" },
  ];
  return (
    <div className={`h-[522px] w-[533px] pt-4 pl-[34px] text-2xl leading-8 ${card}`}>
      <div className="flex gap-[49px]">
        <div className="flex w-[264px] flex-col items-end">
          <div className="w-[239px] text-center text-[#999]">RGB</div>
          <div className="relative mt-2 size-[239px] rounded-full bg-[radial-gradient(closest-side,#fff,transparent),conic-gradient(from_90deg,#f00,#f0f,#00f,#0ff,#0f0,#ff0,#f00)]">
            <div className="absolute top-[162px] left-[45px] size-6 rounded-full border-4 border-black bg-white p-1">
              <div className="size-2 rounded-full bg-[#266bff]" />
            </div>
          </div>
        </div>
        <div className="flex w-[119px] flex-col items-center pl-8">
          <div className="text-[#999]">亮度</div>
          <LevelBar label="亮度" value={60} className="mt-2 h-[239px] w-[51px]" />
        </div>
      </div>
      <div className="mt-2.5 flex items-center gap-5">
        <label className="flex w-[293px] items-center justify-between text-[#222]">
          HEX
          <input defaultValue="#266bff" className="h-[47px] w-[238px] rounded-md border-2 border-[#dcdfe6] text-center font-[family-name:'Liberation_Sans',sans-serif] text-[#9a1ef0]" />
        </label>
        <NumberBox label="亮度" value="60" unit="%" className="h-[47px] w-[119px] rounded-md" />
      </div>
      <div className="mt-[21px] flex">
        <label className="relative flex w-[293px] items-center justify-between text-[#222]">
          RGB
          <input defaultValue="rgb(38, 107, 255)" className="h-[47px] w-[238px] rounded-md border-2 border-[#dcdfe6] text-center font-[family-name:'Liberation_Sans',sans-serif] text-[#9a1ef0]" />
          <svg viewBox="0 0 24 24" className="absolute right-[23px] bottom-1 size-6" fill="none" stroke="#c0c4cc" strokeWidth="2">
            <circle cx="12" cy="12" r="11" />
            <path d="M8.500 8.500l7 7M15.500 8.500l-7 7" />
          </svg>
        </label>
      </div>
      <div className="mt-[21px] flex gap-[7px] pl-[7px]">
        {channels.map((c) => (
          <label key={c.name} className="flex items-center gap-[6px] text-[#222]">
            {c.name}
            <input defaultValue={c.value} className={`h-[47px] w-[59px] rounded-md border-2 border-[#dcdfe6] text-center font-[family-name:'Liberation_Sans',sans-serif] ${c.color}`} />
          </label>
        ))}
      </div>
    </div>
  );
}

function TemperatureCard() {
  return (
    <div className={`flex h-[520px] w-[508px] gap-7 pt-[25px] pl-10 text-[32px] leading-10 ${card}`}>
      <div className="flex w-[190px] flex-col">
        <div className="flex flex-col items-center text-[#999]">
          色温
          <div className="relative mt-3 h-[322px] w-[67px] overflow-hidden rounded-full bg-linear-to-b from-[#36f1fb] via-[#8ff08c] to-[#f8f01c]">
            <div className="absolute inset-x-0 top-[273px] h-0.5 bg-[#e81010]" />
            <input type="range" aria-label="色温" min={2700} max={6500} defaultValue={4650} className="absolute inset-0 opacity-0" />
          </div>
        </div>
        <div className="mt-3.5">
          <NumberBox label="色温" value="4650" unit="k" className="h-16 w-[161px] rounded-lg" />
        </div>
      </div>
      <div className="flex w-[204px] flex-col">
        <div className="flex flex-col items-center text-[#999]">
          亮度
          <LevelBar label="亮度" value={100} className="mt-3 h-[322px] w-[67px]" />
        </div>
        <div className="mt-3.5">
          <NumberBox label="亮度" value="100" unit="%" className="h-16 w-[161px] rounded-lg" />
        </div>
      </div>
    </div>
  );
}

function BrightnessControl({ value }: { value: number }) {
  return (
    <div className="flex flex-col">
      <div className="flex w-[216px] flex-col items-center text-[#999]">
        亮度
        <LevelBar label="亮度" value={value} className="mt-3.5 h-[347px] w-[73px]" />
      </div>
      <div className="mt-4">
        <NumberBox label="亮度" value={String(value)} unit="%" className="h-[68px] w-[171px] rounded-lg" />
      </div>
    </div>
  );
}

function SceneCard() {
  const scenes = ["Welcome", "Presentation", "Video", "Tea_break", "ABC"];
  return (
    <div className={`flex h-[565px] flex-1 gap-[18px] pt-7 pr-[31px] pl-11 text-[34px] leading-[42px] ${card}`}>
      <BrightnessControl value={60} />
      <fieldset className="flex-1 text-[#999]">
        <legend className="mx-auto">场景</legend>
        <div className="mt-3.5 flex h-[434px] overflow-hidden border-2 border-[#eeeeee]">
          <div className="flex-1 text-[40px]">
            {scenes.map((s) => (
              <label
                key={s}
                className={
                  s === "Presentation"
                    ? "flex h-[87px] items-center gap-6 bg-[#e2edfd] pr-[18px] pl-[22px] text-[#409eff]"
                    : "flex h-[87px] items-center gap-6 pr-[18px] pl-[22px]"
                }
              >
                <input
                  type="radio"
                  name="scene"
                  defaultChecked={s === "Presentation"}
                  className="size-[30px] appearance-none rounded-full bg-[#bfc4cf] checked:bg-[#409eff]"
                />
                <span className="flex-1">{s}</span>
                {s === "Presentation" && (
                  <span className="grid size-10 place-items-center rounded-full bg-[#409eff] text-white">
                    <Check className="size-6" strokeWidth={2.5} />
                  </span>
                )}
              </label>
            ))}
          </div>
          <div className="h-[424px] w-10 rounded-xl bg-[#bfc4cf]" />
        </div>
      </fieldset>
    </div>
  );
}

/* ---------- page ---------- */

export default function App() {
  return (
    <main className="min-h-screen bg-white pt-[62px] pb-24 font-[family-name:'Noto_Serif_CJK_SC','Noto_Serif','Liberation_Serif','Noto_Sans_CJK_SC',serif] text-black">
      <header>
        <h1 className="pl-[221px] text-[117px] leading-[140px] text-[#5b1f69]">能源管理-智能照明- 平台控制</h1>
        <p className="mt-7 pl-[235px] font-[family-name:'Liberation_Sans',sans-serif] text-[75px] leading-[90px] text-[#5b1f69]">
          Energy Management - Intelligent Lighting - Platform control
        </p>
        <div className="mt-[45px] pr-[170px] pl-[198px] text-[50px] leading-[60px]">
          <p>使用鼠标可轻松地对视图进行缩放平移等操作，实现对楼层或照明区域进行纵览，检视 和 控制。</p>
          <p className="mt-4">
            Using the mouse, it is easy to zoom, pan, and other operations on the view, enabling a comprehensive overview, inspection, and control of floors or lighting areas
          </p>
        </div>
      </header>
      <div className="mt-[7px] grid grid-cols-[2401fr_1247fr] items-start gap-[135px] pr-[50px] pl-[167px]">
        <div className="pt-[134px]">
          <BrowserWindow />
        </div>
        <div>
          <div className="flex items-end gap-[131px]">
            <div className="pb-5">
              <Heading className="w-[402px]">
                RGB(W)控制
                <br />
                RGB (W) control
              </Heading>
            </div>
            <Heading className="w-[600px]">
              可调色温控制
              <br />
              Adjustable color
              <br />
              temperature control
            </Heading>
          </div>
          <div className="mt-[35px] flex items-start gap-[101px]">
            <RgbCard />
            <TemperatureCard />
          </div>
          <div className="mt-10 flex gap-8">
            <Heading className="w-[472px]">
              亮度控制
              <br />
              Brightness control
            </Heading>
            <Heading className="flex-1">
              场景控制
              <br />
              Scene control
            </Heading>
          </div>
          <div className="mt-[87px] flex gap-[98px]">
            <div className={`h-[565px] w-[312px] pt-7 pl-[45px] text-[34px] leading-[42px] ${card}`}>
              <BrightnessControl value={69} />
            </div>
            <SceneCard />
          </div>
        </div>
      </div>
    </main>
  );
}
